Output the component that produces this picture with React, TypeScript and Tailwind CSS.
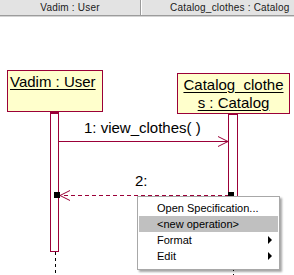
import React from "react";

const MAROON = "#9b0038";

const MENU = [
  { label: "Open Specification...", sub: false, active: false },
  { label: "<new operation>", sub: false, active: true },
  { label: "Format", sub: true, active: false },
  { label: "Edit", sub: true, active: false },
];

export default function App() {
  return (
    <div className="flex h-[275px] w-[294px] flex-col overflow-hidden bg-white font-['Liberation_Sans',Arial,sans-serif] text-black">
      {/* column headers */}
      <div className="flex h-[17px] shrink-0 flex-col">
        <div className="flex h-[15px] bg-[#e3e3e3] text-[10px] leading-[15px] tracking-[0.2px] text-[#1a1a1a]">
          <div className="w-[141px] border-r border-[#9a9a9a] text-center">Vadim : User</div>
          <div className="flex-1 border-l border-white pl-[28px] whitespace-nowrap">Catalog_clothes : Catalog</div>
        </div>
        <div className="h-px bg-[#9c9c9c]" />
        <div className="h-px bg-[#d4d4d4]" />
      </div>

      {/* diagram canvas */}
      <div className="relative flex-1">
        <svg className="absolute inset-0" width="294" height="258" viewBox="0 17 294 258">
          {/* lifelines below activations */}
          <line x1="55.5" y1="252" x2="55.5" y2="275" stroke="#000" strokeDasharray="3 3" />
          <line x1="233.5" y1="262" x2="233.5" y2="275" stroke="#000" strokeDasharray="3 3" />
          {/* message 1 */}
          <line x1="58" y1="141.5" x2="228" y2="141.5" stroke={MAROON} />
          <polyline points="218,136.5 228,141.5 218,146.5" fill="none" stroke={MAROON} />
          {/* message 2 (return) */}
          <line x1="64" y1="195.5" x2="228" y2="195.5" stroke={MAROON} strokeDasharray="4 3" />
          <polyline points="70,190.5 60,195.5 70,200.5" fill="none" stroke={MAROON} />
        </svg>

        {/* Vadim object */}
        <div className="absolute left-[7px] top-[53px] h-[42px] w-[96px] border border-[#9b0038] bg-[#ffffcc]">
          <div className="pl-[2px] pt-[3px] text-[15px] leading-[16px] underline underline-offset-[2px]">Vadim : User</div>
        </div>

        {/* Catalog object */}
        <div className="absolute left-[177px] top-[56px] h-[41px] w-[113px] border border-[#9b0038] bg-[#ffffcc] text-center text-[15px] leading-[18px] underline underline-offset-[2px]">
          <div className="pt-[2px]">Catalog_clothe</div>
          <div>s : Catalog</div>
        </div>

        {/* activations */}
        <div className="absolute left-[50px] top-[95px] h-[140px] w-[9px] border border-t-2 border-[#9b0038] bg-white" />
        <div className="absolute left-[228px] top-[96px] h-[150px] w-[10px] border border-t-2 border-[#9b0038] bg-white" />

        {/* message labels */}
        <div className="absolute left-[84px] top-[103px] text-[15px] leading-none whitespace-nowrap">1: view_clothes( )</div>
        <div className="absolute left-[135px] top-[156px] text-[15px] leading-none">2:</div>

        {/* focus handles */}
        <div className="absolute left-[54px] top-[175px] h-[6px] w-[6px] bg-black" />
        <div className="absolute left-[228px] top-[175px] h-[6px] w-[6px] bg-black" />

        {/* context menu */}
        <div className="absolute left-[137px] top-[179px] w-[143px] border border-[#a8a8a8] bg-white px-[1px] pb-[5px] pt-[3px] shadow-[2px_2px_2px_rgba(0,0,0,0.35)]">
          {MENU.map((item) => (
            <div
              key={item.label}
              className={
                "flex h-[16px] items-center justify-between pl-[18px] pr-[6px] text-[11px] " +
                (item.active ? "bg-[#c0c0c0]" : "")
              }
            >
              <span>{item.label}</span>
              {item.sub && (
                <span className="h-0 w-0 border-y-[4px] border-l-[4px] border-y-transparent border-l-black" />
              )}
            </div>
          ))}
        </div>
      </div>
    </div>
  );
}
